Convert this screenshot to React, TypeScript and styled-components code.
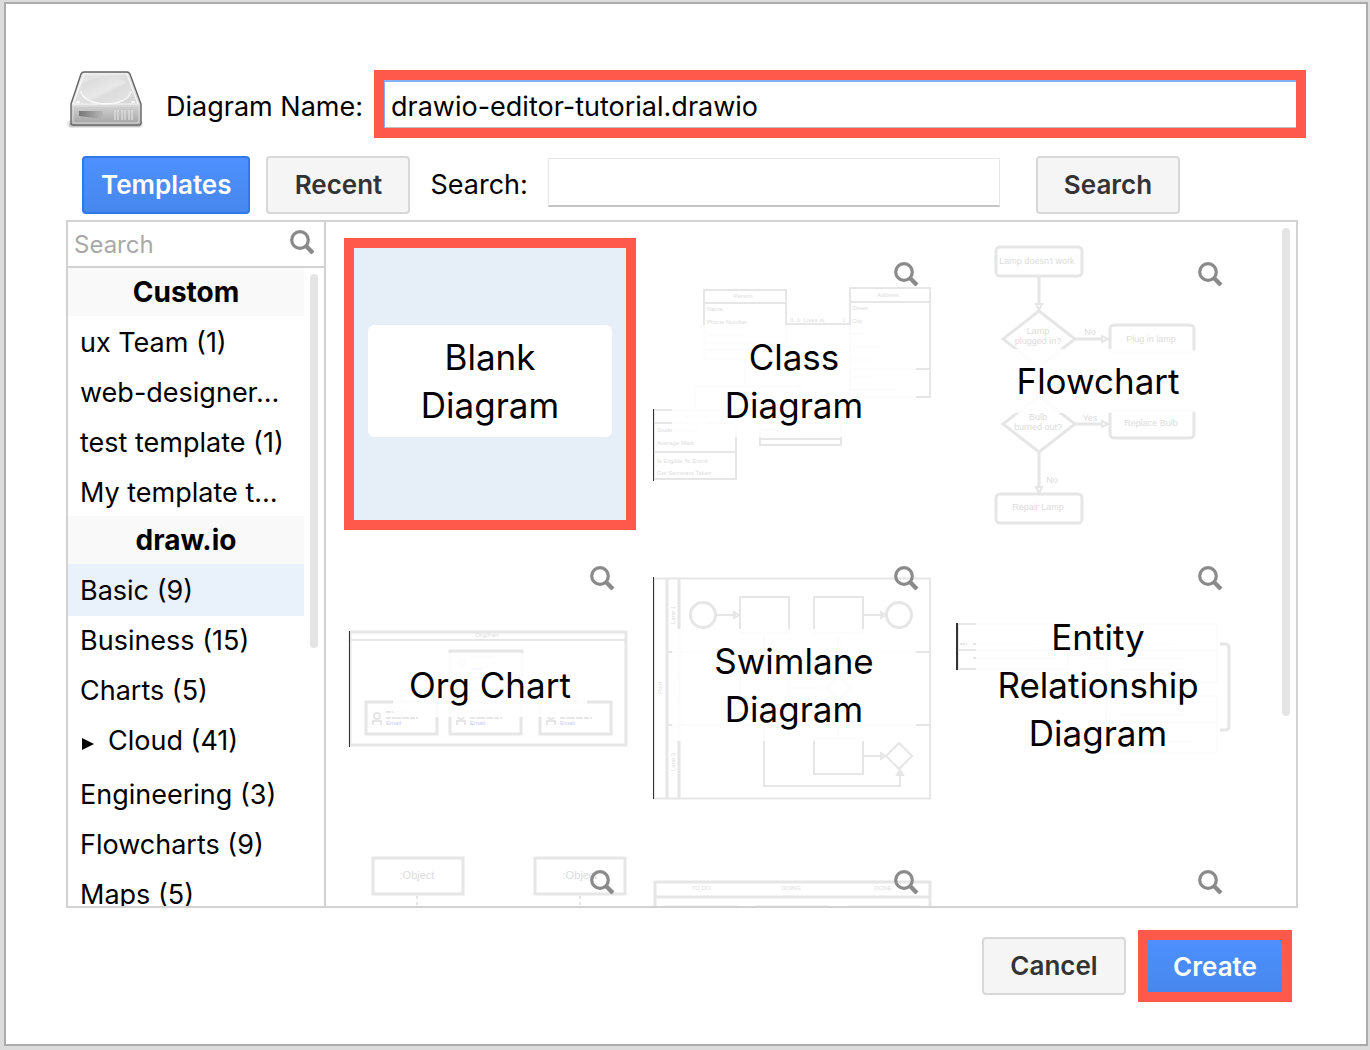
import React, { useState } from "react";
import styled, { createGlobalStyle, css } from "styled-components";

const GlobalStyle = createGlobalStyle`
  *, *::before, *::after { box-sizing: border-box; }
  body {
    margin: 0;
    background: #dcdcdc;
    color: #000;
    font-family: Inter, "Liberation Sans", sans-serif;
    font-size: 27px;
  }
  button, input { font-family: inherit; }
`;

const accent = "#ff594b";
const line = "#d2d2d2";

const Page = styled.div`
  padding: 2px 2px 4px 4px;
`;

const Dialog = styled.form`
  display: flex;
  flex-direction: column;
  padding: 66px 60px 42px;
  border: 2px solid #acacac;
  background: #fff;
`;

const NameRow = styled.div`
  display: grid;
  grid-template-columns: 80px 208px 1fr;
  column-gap: 10px;
  align-items: center;
  margin-bottom: 18px;
`;

const NameLabel = styled.label`
  padding: 6px 0 0 10px;
  line-height: 36px;
  white-space: nowrap;
`;

const Highlight = styled.div`
  display: flex;
  border: 10px solid ${accent};
`;

const NameInput = styled.input`
  flex: 1;
  min-width: 0;
  height: 48px;
  padding: 2px 6px 0;
  border: 0 solid #85b0f8;
  border-width: 2px 0 0 1px;
  box-shadow: inset 0 -1px 0 #c0c0c0;
  background: #fff;
  color: #000;
  font-size: 27px;
  outline: none;
`;

const Toolbar = styled.div`
  display: flex;
  align-items: center;
  gap: 16px;
  margin: 0 126px 6px 16px;
`;

const Button = styled.button<{ $primary?: boolean; $flat?: boolean }>`
  flex: none;
  min-width: 144px;
  height: 58px;
  padding: 0 17px 2px;
  border: 2px solid #d8d8d8;
  border-radius: 4px;
  background: #f5f5f5;
  color: #333;
  font-size: 26px;
  font-weight: 600;
  ${(p) =>
    p.$primary &&
    css`
      border-color: #3079ed;
      background: linear-gradient(#4d90fe, #4787ed);
      color: #fff;
    `}
  ${(p) =>
    p.$flat &&
    css`
      min-width: 134px;
      height: 52px;
      padding-bottom: 0;
      border: 0;
      border-radius: 0;
    `}
`;

const SearchLabel = styled.label`
  padding: 0 4px 2px;
  white-space: nowrap;
`;

const SearchInput = styled.input`
  flex: 1;
  min-width: 0;
  height: 49px;
  margin: 0 20px 6px 0;
  padding: 0 8px;
  border: 1px solid #e6e6e6;
  border-bottom: 2px solid #c4c4c4;
  background: #fff;
  font-size: 27px;
`;

const Browser = styled.div`
  display: grid;
  grid-template-columns: 258px 1fr;
  height: 688px;
  margin-right: 8px;
  border: 2px solid ${line};
`;

const Sidebar = styled.nav`
  display: flex;
  flex-direction: column;
  min-height: 0;
  border-right: 2px solid ${line};
`;

const Filter = styled.div`
  display: flex;
  flex: none;
  align-items: center;
  height: 46px;
  padding: 0 10px 4px 6px;
  border-bottom: 2px solid ${line};
`;

const FilterInput = styled.input`
  flex: 1;
  min-width: 0;
  padding: 4px 0 0;
  border: 0;
  background: transparent;
  font-size: 24px;
  outline: none;
  &::placeholder { color: #a9a9a9; opacity: 1; }
`;

const ListArea = styled.div`
  display: flex;
  flex: 1;
  min-height: 0;
`;

const List = styled.div`
  flex: 1;
  min-width: 0;
  overflow: hidden;
`;

const ListHeading = styled.h2`
  margin: 0;
  background: #f9f9f9;
  font-size: 28px;
  font-weight: 700;
  line-height: 48px;
  text-align: center;
`;

const ListItem = styled.button<{ $selected?: boolean; $parent?: boolean }>`
  display: block;
  width: 100%;
  height: ${(p) => (p.$parent ? 56 : 52)}px;
  margin-bottom: -2px;
  padding: 2px 12px ${(p) => (p.$parent ? 4 : 0)}px;
  border: 0;
  background: ${(p) => (p.$selected ? "#e9f1fa" : "transparent")};
  color: #000;
  font-size: 27px;
  line-height: 48px;
  text-align: left;
  white-space: nowrap;
`;

const Arrow = styled.svg`
  margin-right: 14px;
`;

const ScrollTrack = styled.div`
  flex: none;
  width: 20px;
  padding: 6px;
`;

const ScrollThumb = styled.div<{ $size: number }>`
  width: 8px;
  height: ${(p) => p.$size}px;
  border-radius: 4px;
  background: #e4e4e4;
`;

const Gallery = styled.div`
  display: flex;
  min-width: 0;
  min-height: 0;
  overflow: hidden;
`;

const Tiles = styled.div`
  display: grid;
  flex: 1;
  grid-template-columns: repeat(auto-fill, 292px);
  grid-auto-rows: 292px;
  gap: 12px;
  padding: 16px 18px;
`;

const Tile = styled.div`
  display: grid;
  grid-template: 100% / 100%;
  > * { grid-area: 1 / 1; }
`;

const Choose = styled.button<{ $selected?: boolean }>`
  display: flex;
  align-items: center;
  justify-content: center;
  padding: 0 0 6px;
  border: 0;
  background: transparent;
  color: #000;
  ${(p) =>
    p.$selected &&
    css`
      border: 10px solid ${accent};
      background: #e6eef8;
    `}
`;

const TileLabel = styled.span<{ $solid?: boolean }>`
  max-width: 244px;
  padding: 8px 16px;
  border-radius: 6px;
  background: ${(p) => (p.$solid ? "#fff" : "rgba(255, 255, 255, 0.85)")};
  font-size: 35px;
  line-height: 48px;
`;

const Preview = styled.button`
  align-self: start;
  justify-self: end;
  margin: 24px 22px 0 0;
  padding: 0;
  border: 0;
  background: transparent;
  line-height: 0;
`;

const Footer = styled.div`
  display: flex;
  align-items: center;
  justify-content: flex-end;
  gap: 12px;
  margin: 22px 14px 0 0;
`;

const Drive = styled.svg`
  align-self: start;
`;

const Sketch = styled.svg`
  width: 292px;
  height: 292px;
  fill: none;
  stroke: #e6e6e6;
  stroke-width: 3;
  text {
    fill: #dcdcdc;
    stroke: none;
    font-family: "Liberation Sans", sans-serif;
    font-size: 6px;
  }
  .mid { text-anchor: middle; }
  .big { font-size: 9px; }
  .object { font-size: 11px; }
  .thin { stroke-width: 2; }
  .edge { stroke: #333; stroke-width: 1; }
  .words { stroke-width: 2; stroke-dasharray: 5 1 9 1 7 1; }
  .link { fill: #c9c9f8; }
  .linkline { stroke: #c9c9f8; stroke-width: 2; }
`;

function Magnifier() {
  return (
    <svg width="24" height="24" viewBox="0 0 24 24" fill="none" stroke="#8a8a8a" aria-hidden="true">
      <circle cx="10" cy="10" r="8.300" strokeWidth="3.200" />
      <path d="M16 16l7 7" strokeWidth="4.400" />
    </svg>
  );
}

function DriveIcon() {
  return (
    <Drive width="80" height="60" viewBox="0 0 80 60" aria-hidden="true">
      <defs>
        <linearGradient id="lid" x1="0" y1="0" x2="1" y2="1">
          <stop offset="0" stopColor="#e9e9e9" />
          <stop offset="1" stopColor="#cfcfcf" />
        </linearGradient>
        <linearGradient id="disc" x1="0" y1="0" x2="1" y2="1">
          <stop offset="0" stopColor="#d6d6d6" />
          <stop offset=".5" stopColor="#e8e8e8" />
          <stop offset=".6" stopColor="#dcdcdc" />
          <stop offset="1" stopColor="#e6e6e6" />
        </linearGradient>
        <linearGradient id="front" x1="0" y1="0" x2="0" y2="1">
          <stop offset="0" stopColor="#d2d2d2" />
          <stop offset="1" stopColor="#a4a4a4" />
        </linearGradient>
        <linearGradient id="slot" x1="0" y1="0" x2="1" y2="0">
          <stop offset="0" stopColor="#777" />
          <stop offset="1" stopColor="#b8b8b8" />
        </linearGradient>
      </defs>
      <rect x="1" y="50" width="76" height="8" rx="4" fill="#e8e8e8" />
      <rect x="3" y="52" width="72" height="5" rx="2" fill="#c4c4c4" />
      <path d="M18 2h43q2 0 3 2l11 30v19q0 2-2 2H7q-2 0-2-2V34L15 4q1-2 3-2z" fill="url(#lid)" stroke="#636363" strokeWidth="1.4" />
      <path d="M18 4h43l11 30H7z" fill="none" stroke="#f8f8f8" strokeWidth="1.2" />
      <ellipse cx="40" cy="20" rx="25" ry="13" fill="url(#disc)" />
      <path d="M15 21c2 17 48 17 50 0" fill="none" stroke="#fafafa" strokeWidth="1.4" />
      <path d="M6 36h68v16q0 2-2 2H8q-2 0-2-2z" fill="url(#front)" />
      <path d="M7 36h66v15q0 2-2 2H9q-2 0-2-2z" fill="none" stroke="#ddd" strokeWidth="1" />
      <ellipse cx="12" cy="32" rx="2" ry="1" fill="#fff" />
      <ellipse cx="67" cy="32" rx="2" ry="1" fill="#fff" />
      <path d="M13 41h24v8l-24-3z" fill="url(#slot)" />
      <path d="M49 40v10M52 40v10M56 40v10M59 40v10M63 40v10M66 40v10" stroke="#e2e2e2" strokeWidth="1.2" />
    </Drive>
  );
}

function ClassSketch() {
  return (
    <Sketch viewBox="0 0 292 292" aria-hidden="true">
      <path className="thin" d="M56 52h82v69H56zM56 65h82M56 105h82M202 50h80v109h-80zM202 64h80M202 131h80M138 86h64M6 172h82v69H6zM6 185h82M6 214h82M112 172h81v35h-81zM112 185h81M112 201h81M97 121v27M47 172v-24h105v24" />
      <path className="words" d="M59 97h40M59 112h60M204 96h14M204 109h32M204 122h22M204 139h20M204 152h42M36 179h22M115 192h20" />
      <path className="edge" d="M5.500 171v72" />
      <text className="mid" x="95" y="60" fontStyle="italic">Person</text>
      <text x="59" y="73">Name</text>
      <text x="59" y="86">Phone Number</text>
      <text x="142" y="84">0..1</text>
      <text className="mid" x="166" y="84">Lives at</text>
      <text x="194" y="84">1</text>
      <text className="mid" x="240" y="59">Address</text>
      <text x="204" y="72">Street</text>
      <text x="204" y="85">City</text>
      <text x="9" y="194">Student Number</text>
      <text x="9" y="207">Average Mark</text>
      <text x="9" y="225">Is Eligible To Enroll</text>
      <text x="9" y="237">Get Seminars Taken</text>
    </Sketch>
  );
}

function FlowSketch() {
  return (
    <Sketch viewBox="0 0 292 292" aria-hidden="true">
      <rect x="44" y="9" width="86" height="29" rx="4" />
      <rect x="158" y="87" width="84" height="28" rx="4" />
      <rect x="158" y="172" width="84" height="28" rx="4" />
      <rect x="44" y="256" width="86" height="29" rx="4" />
      <path d="M87 38v28M87 214v34M123 101h28M123 186h28M87 129v30" />
      <path d="M87 73l36 28-36 28-36-28zM87 158l36 28-36 28-36-28z" />
      <path className="thin" d="M84 66h6l-3 6zM84 249h6l-3 6zM150 98v6l6-3zM150 183v6l6-3z" />
      <text className="mid big" x="85" y="26">Lamp doesn't work</text>
      <text className="mid big" x="86" y="96">Lamp</text>
      <text className="mid big" x="86" y="106">plugged in?</text>
      <text className="mid big" x="138" y="97">No</text>
      <text className="mid big" x="199" y="104">Plug in lamp</text>
      <text className="mid big" x="86" y="182">Bulb</text>
      <text className="mid big" x="86" y="192">burned out?</text>
      <text className="mid big" x="138" y="183">Yes</text>
      <text className="mid big" x="199" y="188">Replace Bulb</text>
      <text className="mid big" x="100" y="245">No</text>
      <text className="mid big" x="86" y="272">Repair Lamp</text>
    </Sketch>
  );
}

function OrgSketch() {
  return (
    <Sketch viewBox="0 0 292 292" aria-hidden="true">
      <path d="M6 90h276v113H6z" />
      <path className="thin" d="M6 98h276M57 160v-12h175v12M142 135v25" />
      <path className="edge" d="M5.500 89v116" />
      <text className="mid" x="143" y="95">Orgchart</text>
      <rect x="106" y="109" width="72" height="27" />
      <circle className="thin" cx="118" cy="121" r="3" />
      <path className="words" d="M127 115h24" />
      <path className="linkline" d="M127 127h12" />
      {[22, 106, 196].map((x) => (
        <g key={x}>
          <rect x={x} y="160" width="71" height="32" />
          <circle className="thin" cx={x + 11} cy="174" r="3" />
          <path className="thin" d={`M${x + 7} 183v-4h8v4`} />
          <path className="words" d={`M${x + 20} 170h26M${x + 20} 176h32`} />
          <text className="link" x={x + 20} y="183">Email</text>
        </g>
      ))}
    </Sketch>
  );
}

function SwimlaneSketch() {
  return (
    <Sketch viewBox="0 0 292 292" aria-hidden="true">
      <path className="thin" d="M6 36.500h276v220H6zM19 110h263M19 183h263" />
      <path d="M31 36v220M19 36v220" />
      <circle cx="55" cy="73" r="12.500" />
      <circle cx="251" cy="73" r="12.500" />
      <path className="thin" d="M92 55h49v36H92zM166 55h49v36h-49zM92 128h49v37H92zM166 196h49v36h-49zM251 201l13 13-13 13-13-13zM190 134l12 12-12 12-12-12z" />
      <path className="thin" d="M68 73h20M215 73h20M215 214h20M116 165v79h136v-14M116 91v37M141 146h34M190 134V94M190 158v35" />
      <path className="thin" d="M86 70l5 3-5 3zM233 70l5 3-5 3zM233 211l5 3-5 3zM249 233l3-5 3 5zM187 99l3-5 3 5z" />
      <path className="words" d="M26 136v20" />
      <path className="edge" d="M5.500 35v222" />
      <text className="mid" transform="translate(14 146) rotate(-90)">Pool</text>
      <text className="mid" transform="translate(27 73) rotate(-90)">Lane 1</text>
      <text className="mid" transform="translate(27 220) rotate(-90)">Lane 3</text>
    </Sketch>
  );
}

function EntitySketch() {
  return (
    <Sketch viewBox="0 0 292 292" aria-hidden="true">
      <path className="thin" d="M6 82h110v45H6zM6 108h110M154 82h111v58H154zM154 108h111M154 154h111v57H154zM154 180h111M116 102h14q6 0 6 6v4q0 4 4 4h14" />
      <path d="M268 102h5q4 0 4 4v78q0 4-4 4h-5" />
      <path className="words" d="M8 102h7M21 102h66M21 116h84M170 102h54M170 116h60M170 128h62M156 173h6M170 173h64M170 200h70" />
      <path className="edge" d="M4.500 81v47M5.500 81v47" />
    </Sketch>
  );
}

function SequenceSketch() {
  return (
    <Sketch viewBox="0 0 292 292" aria-hidden="true">
      <path d="M29 12h90v36H29zM191 12h90v36h-90z" />
      <path className="thin" strokeDasharray="3 3" d="M73 50v60M236 50v60" />
      <text className="mid object" x="73" y="33">:Object</text>
      <text className="mid object" x="236" y="33">:Object</text>
    </Sketch>
  );
}

function BoardSketch() {
  return (
    <Sketch viewBox="0 0 292 292" aria-hidden="true">
      <path d="M7 36h275v200H7zM7 51h275" />
      <path d="M18 61h70v30H18zM110 61h69v30h-69zM202 61h69v30h-69z" />
      <text className="mid" x="53" y="44">TO DO</text>
      <text className="mid" x="143" y="44">DOING</text>
      <text className="mid" x="235" y="44">DONE</text>
    </Sketch>
  );
}

const sections = [
  { title: "Custom", items: ["ux Team (1)", "web-designer…", "test template (1)", "My template t…"] },
  {
    title: "draw.io",
    items: ["Basic (9)", "Business (15)", "Charts (5)", "Cloud (41)", "Engineering (3)", "Flowcharts (9)", "Maps (5)"],
  },
];

const templates: { name: string; Art?: () => React.JSX.Element; hidden?: boolean }[] = [
  { name: "Blank Diagram" },
  { name: "Class Diagram", Art: ClassSketch },
  { name: "Flowchart", Art: FlowSketch },
  { name: "Org Chart", Art: OrgSketch },
  { name: "Swimlane Diagram", Art: SwimlaneSketch },
  { name: "Entity Relationship Diagram", Art: EntitySketch },
  { name: "Sequence", Art: SequenceSketch, hidden: true },
  { name: "Board", Art: BoardSketch, hidden: true },
  { name: "Simple", hidden: true },
];

export default function App() {
  const [name, setName] = useState("drawio-editor-tutorial.drawio");
  const [category, setCategory] = useState("Basic (9)");
  const [template, setTemplate] = useState("Blank Diagram");

  return (
    <Page>
      <GlobalStyle />
      <Dialog onSubmit={(e) => e.preventDefault()}>
        <NameRow>
          <DriveIcon />
          <NameLabel htmlFor="name">Diagram Name:</NameLabel>
          <Highlight>
            <NameInput id="name" value={name} onChange={(e) => setName(e.target.value)} />
          </Highlight>
        </NameRow>

        <Toolbar>
          <Button type="button" $primary>Templates</Button>
          <Button type="button">Recent</Button>
          <SearchLabel htmlFor="search">Search:</SearchLabel>
          <SearchInput id="search" />
          <Button type="button">Search</Button>
        </Toolbar>

        <Browser>
          <Sidebar>
            <Filter>
              <FilterInput placeholder="Search" aria-label="Search" />
              <Magnifier />
            </Filter>
            <ListArea>
              <List>
                {sections.map((s) => (
                  <React.Fragment key={s.title}>
                    <ListHeading>{s.title}</ListHeading>
                    {s.items.map((item) => {
                      const parent = item.startsWith("Cloud");
                      return (
                        <ListItem
                          key={item}
                          type="button"
                          $parent={parent}
                          $selected={item === category}
                          onClick={() => setCategory(item)}
                        >
                          {parent && (
                            <Arrow width="14" height="12" viewBox="0 0 14 12" aria-hidden="true">
                              <path d="M2 0l12 6-12 6z" />
                            </Arrow>
                          )}
                          {item}
                        </ListItem>
                      );
                    })}
                  </React.Fragment>
                ))}
              </List>
              <ScrollTrack>
                <ScrollThumb $size={374} />
              </ScrollTrack>
            </ListArea>
          </Sidebar>

          <Gallery>
            <Tiles>
              {templates.map(({ name: label, Art, hidden }) => (
                <Tile key={label}>
                  {Art && <Art />}
                  <Choose
                    type="button"
                    aria-label={label}
                    $selected={label === template}
                    onClick={() => setTemplate(label)}
                  >
                    {!hidden && <TileLabel $solid={label === template}>{label}</TileLabel>}
                  </Choose>
                  {label !== template && (
                    <Preview type="button" aria-label="Preview">
                      <Magnifier />
                    </Preview>
                  )}
                </Tile>
              ))}
            </Tiles>
            <ScrollTrack>
              <ScrollThumb $size={488} />
            </ScrollTrack>
          </Gallery>
        </Browser>

        <Footer>
          <Button type="button">Cancel</Button>
          <Highlight>
            <Button type="submit" $primary $flat>Create</Button>
          </Highlight>
        </Footer>
      </Dialog>
    </Page>
  );
}
